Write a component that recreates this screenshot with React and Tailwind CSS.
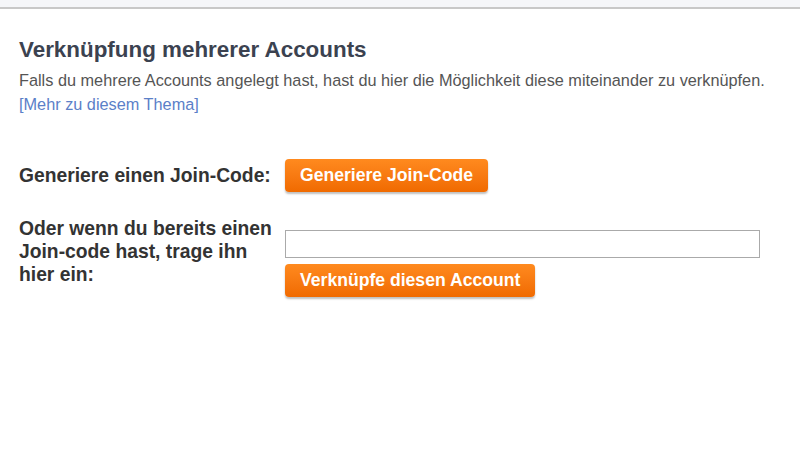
export default function App() {
  return (
    <div className="w-[800px] h-[460px] bg-white overflow-hidden" style={{ fontFamily: '"Liberation Sans", Arial, sans-serif' }}>
      <div className="h-[9px] bg-[#f5f6f9] border-b-2 border-[#c8c8c8]"></div>
      <div className="pl-[19px] pt-[28px]">
        <h1 className="text-[22.4px] leading-[26px] font-bold text-[#3b4250]">Verknüpfung mehrerer Accounts</h1>
        <p className="mt-[7px] text-[16.3px] leading-[20px] text-[#555]">Falls du mehrere Accounts angelegt hast, hast du hier die Möglichkeit diese miteinander zu verknüpfen.</p>
        <a className="block mt-[4px] text-[16.3px] leading-[20px] text-[#5b80c8]">[Mehr zu diesem Thema]</a>
        <div className="mt-[45px] flex items-center">
          <div className="w-[255px] mr-[11px] text-[19.3px] leading-[23px] font-bold text-[#333]">Generiere einen Join-Code:</div>
          <button className="h-[33px] px-[15px] rounded-[4px] bg-gradient-to-b from-[#ff8a1e] to-[#f06a00] text-white font-bold text-[17.6px] shadow-[0_2px_2px_rgba(0,0,0,0.25)] whitespace-nowrap">Generiere Join-Code</button>
        </div>
        <div className="mt-[25px] flex">
          <div className="w-[255px] mr-[11px] text-[19.3px] leading-[23px] font-bold text-[#333]">Oder wenn du bereits einen Join-code hast, trage ihn hier ein:</div>
          <div className="flex flex-col items-start pt-[13px]">
            <input className="w-[475px] h-[28px] border border-[#aaa] bg-white" />
            <button className="mt-[6px] h-[33px] px-[15px] rounded-[4px] bg-gradient-to-b from-[#ff8a1e] to-[#f06a00] text-white font-bold text-[17.6px] shadow-[0_2px_2px_rgba(0,0,0,0.25)] whitespace-nowrap">Verknüpfe diesen Account</button>
          </div>
        </div>
      </div>
    </div>
  );
}
